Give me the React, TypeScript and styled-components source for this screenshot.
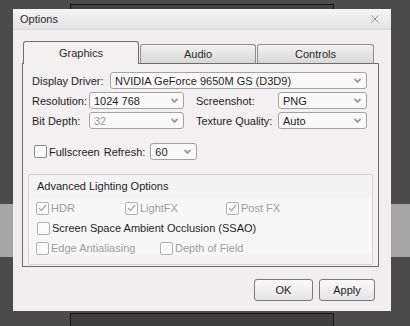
import React from "react";
import styled, { createGlobalStyle } from "styled-components";

const Global = createGlobalStyle`
  html, body { margin: 0; padding: 0; background: #4b4b4b; }
  body { font-family: "Liberation Sans", Arial, sans-serif; font-size: 11px; color: #1e1e1e; }
`;

const Page = styled.div`
  position: relative;
  width: 410px;
  height: 326px;
  overflow: hidden;
  background: #4b4b4b;
`;

const DecoTop = styled.div`
  margin: 4px 0 0 70px;
  width: 264px;
  height: 5px;
  box-sizing: border-box;
  border: 1px solid #151515;
  border-bottom: none;
  background: #434343;
`;

const DecoBottom = styled.div`
  margin: 2px 0 0 70px;
  width: 264px;
  height: 20px;
  box-sizing: border-box;
  border: 1px solid #151515;
  border-bottom: none;
  background: #3e3e3e;
`;

const Dialog = styled.div`
  position: relative;
  z-index: 1;
  margin-left: 13px;
  width: 378px;
  height: 302px;
  box-sizing: border-box;
  background: #f0eeee;
  display: flex;
  flex-direction: column;
`;

const TitleBar = styled.div`
  height: 21px;
  box-sizing: border-box;
  padding: 0 12px 0 7px;
  display: flex;
  align-items: center;
  justify-content: space-between;
  background: linear-gradient(#f6f5f5, #e4e3e3);
  border-bottom: 1px solid #d9d7d7;
  color: #2a2a2a;
`;

const Body = styled.div`
  padding: 12px 12px 0 9px;
  display: flex;
  flex-direction: column;
`;

const TabRow = styled.div`
  display: flex;
  align-items: flex-end;
  gap: 1px;
  padding-left: 1px;
  height: 22px;
  margin-bottom: -1px;
  position: relative;
  z-index: 1;
`;

const Tab = styled.div<{ $active?: boolean; $w: number }>`
  width: ${(p) => p.$w}px;
  height: ${(p) => (p.$active ? 23 : 20)}px;
  box-sizing: border-box;
  display: flex;
  align-items: center;
  justify-content: center;
  border: 1px solid ${(p) => (p.$active ? "#6e6e6e" : "#8c8c8c")};
  border-bottom: ${(p) => (p.$active ? "none" : "1px solid #6b6b6b")};
  border-radius: 3px 3px 0 0;
  background: ${(p) => (p.$active ? "#f2f0f0" : "linear-gradient(#f3f2f2, #d9d8d8)")};
  color: #2a2a2a;
  padding-bottom: ${(p) => (p.$active ? 1 : 0)}px;
`;

const Panel = styled.div`
  height: 204px;
  box-sizing: border-box;
  border: 1px solid #6b6b6b;
  background: #f2f0f0;
  padding: 8px 5px 0 5px;
  display: flex;
  flex-direction: column;
`;

const FormRow = styled.div<{ $mb: number }>`
  display: flex;
  align-items: center;
  padding: 0 6px 0 4px;
  margin-bottom: ${(p) => p.$mb}px;
`;

const Label = styled.span<{ $w?: number; $ml?: number }>`
  width: ${(p) => (p.$w ? `${p.$w}px` : "auto")};
  margin-left: ${(p) => p.$ml ?? 0}px;
  flex: none;
  white-space: nowrap;
  color: #1e1e1e;
`;

const SelectBox = styled.div<{ $w?: number; $ml?: number; $disabled?: boolean }>`
  ${(p) => (p.$w ? `width: ${p.$w}px; flex: none;` : "flex: 1;")}
  margin-left: ${(p) => p.$ml ?? 0}px;
  height: 17px;
  box-sizing: border-box;
  border: 1px solid #a3a3a3;
  border-radius: 3px;
  background: #f9f9f9;
  display: flex;
  align-items: center;
  justify-content: space-between;
  padding: 0 5px 0 4px;
  color: ${(p) => (p.$disabled ? "#9a9a9a" : "#1e1e1e")};
`;

const Arrow = () => (
  <svg width="7" height="5" viewBox="0 0 7 5">
    <polyline points="0.5,1 3.5,4 6.5,1" fill="none" stroke="#9c9c9c" strokeWidth="1.8" />
  </svg>
);

const Select = ({ value, w, ml, disabled }: { value: string; w?: number; ml?: number; disabled?: boolean }) => (
  <SelectBox $w={w} $ml={ml} $disabled={disabled}>
    <span>{value}</span>
    <Arrow />
  </SelectBox>
);

const Box = styled.span<{ $ml?: number; $dark?: boolean }>`
  width: 13px;
  height: 13px;
  flex: none;
  box-sizing: border-box;
  border: 1px solid ${(p) => (p.$dark ? "#8a8a8a" : "#b0b0b0")};
  border-radius: 2px;
  background: #fbfbfb;
  margin-left: ${(p) => p.$ml ?? 0}px;
  margin-right: 2px;
  display: flex;
  align-items: center;
  justify-content: center;
`;

const CheckText = styled.span<{ $disabled?: boolean }>`
  color: ${(p) => (p.$disabled ? "#9d9d9d" : "#1e1e1e")};
  white-space: nowrap;
`;

const CheckItem = styled.div<{ $w?: number }>`
  display: flex;
  align-items: center;
  ${(p) => (p.$w ? `width: ${p.$w}px; flex: none;` : "")}
`;

const Check = ({
  label,
  checked,
  disabled,
  w,
  ml,
  dark,
}: {
  label: string;
  checked?: boolean;
  disabled?: boolean;
  w?: number;
  ml?: number;
  dark?: boolean;
}) => (
  <CheckItem $w={w}>
    <Box $ml={ml} $dark={dark}>
      {checked && (
        <svg width="9" height="8" viewBox="0 0 9 8">
          <polyline points="1,4 3.5,6.5 8,1" fill="none" stroke="#a9a9a9" strokeWidth="1.3" />
        </svg>
      )}
    </Box>
    <CheckText $disabled={disabled}>{label}</CheckText>
  </CheckItem>
);

const Group = styled.div`
  margin-top: 14px;
  height: 91px;
  box-sizing: border-box;
  border: 1px solid #d4d2d2;
  border-radius: 2px;
  background: linear-gradient(#f4f3f3 0px, #f4f3f3 24px, #f8f7f7 24px, #f8f7f7 80px, #f4f3f3 80px);
  padding: 4px 0 0 7px;
  display: flex;
  flex-direction: column;
`;

const GroupTitle = styled.div`
  height: 14px;
  line-height: 14px;
  padding-left: 1px;
  margin-bottom: 5px;
  color: #1e1e1e;
`;

const CheckRow = styled.div`
  height: 20px;
  display: flex;
  align-items: center;
`;

const ButtonRow = styled.div`
  display: flex;
  justify-content: flex-end;
  gap: 6px;
  padding-right: 4px;
  margin-top: 12px;
`;

const Button = styled.div<{ $w: number }>`
  width: ${(p) => p.$w}px;
  height: 22px;
  box-sizing: border-box;
  border: 1px solid #7a7a7a;
  border-radius: 3px;
  background: linear-gradient(#f9f9f9, #e6e5e5);
  display: flex;
  align-items: center;
  justify-content: center;
  color: #1e1e1e;
`;

const Band = styled.div`
  position: absolute;
  z-index: 0;
  left: 0;
  right: 0;
  top: 204px;
  height: 53px;
  background: rgba(255, 255, 255, 0.5);
  pointer-events: none;
`;

const CloseIcon = () => (
  <svg width="8" height="8" viewBox="0 0 8 8">
    <line x1="0.5" y1="0.5" x2="7.5" y2="7.5" stroke="#8e8e8e" strokeWidth="1" />
    <line x1="7.5" y1="0.5" x2="0.5" y2="7.5" stroke="#8e8e8e" strokeWidth="1" />
  </svg>
);

export default function App() {
  return (
    <Page>
      <Global />
      <Band />
      <DecoTop />
      <Dialog>
        <TitleBar>
          <span>Options</span>
          <CloseIcon />
        </TitleBar>
        <Body>
          <TabRow>
            <Tab $active $w={116}>Graphics</Tab>
            <Tab $w={116}>Audio</Tab>
            <Tab $w={117}>Controls</Tab>
          </TabRow>
          <Panel>
            <FormRow $mb={3}>
              <Label $w={78}>Display Driver:</Label>
              <Select value="NVIDIA GeForce 9650M GS (D3D9)" />
            </FormRow>
            <FormRow $mb={3}>
              <Label $w={57}>Resolution:</Label>
              <Select value="1024 768" w={95} />
              <Label $w={82} $ml={12}>Screenshot:</Label>
              <Select value="PNG" w={89} />
            </FormRow>
            <FormRow $mb={14}>
              <Label $w={57}>Bit Depth:</Label>
              <Select value="32" w={95} disabled />
              <Label $w={82} $ml={12}>Texture Quality:</Label>
              <Select value="Auto" w={89} />
            </FormRow>
            <FormRow $mb={0}>
              <Check label="Fullscreen" ml={2} dark />
              <Label $ml={4}>Refresh:</Label>
              <Select value="60" w={47} ml={5} />
            </FormRow>
            <Group>
              <GroupTitle>Advanced Lighting Options</GroupTitle>
              <CheckRow>
                <Check label="HDR" checked disabled w={89} />
                <Check label="LightFX" checked disabled w={101} />
                <Check label="Post FX" checked disabled />
              </CheckRow>
              <CheckRow>
                <Check label="Screen Space Ambient Occlusion (SSAO)" ml={1} />
              </CheckRow>
              <CheckRow>
                <Check label="Edge Antialiasing" disabled w={124} />
                <Check label="Depth of Field" disabled />
              </CheckRow>
            </Group>
          </Panel>
          <ButtonRow>
            <Button $w={59}>OK</Button>
            <Button $w={56}>Apply</Button>
          </ButtonRow>
        </Body>
      </Dialog>
      <DecoBottom />
    </Page>
  );
}
